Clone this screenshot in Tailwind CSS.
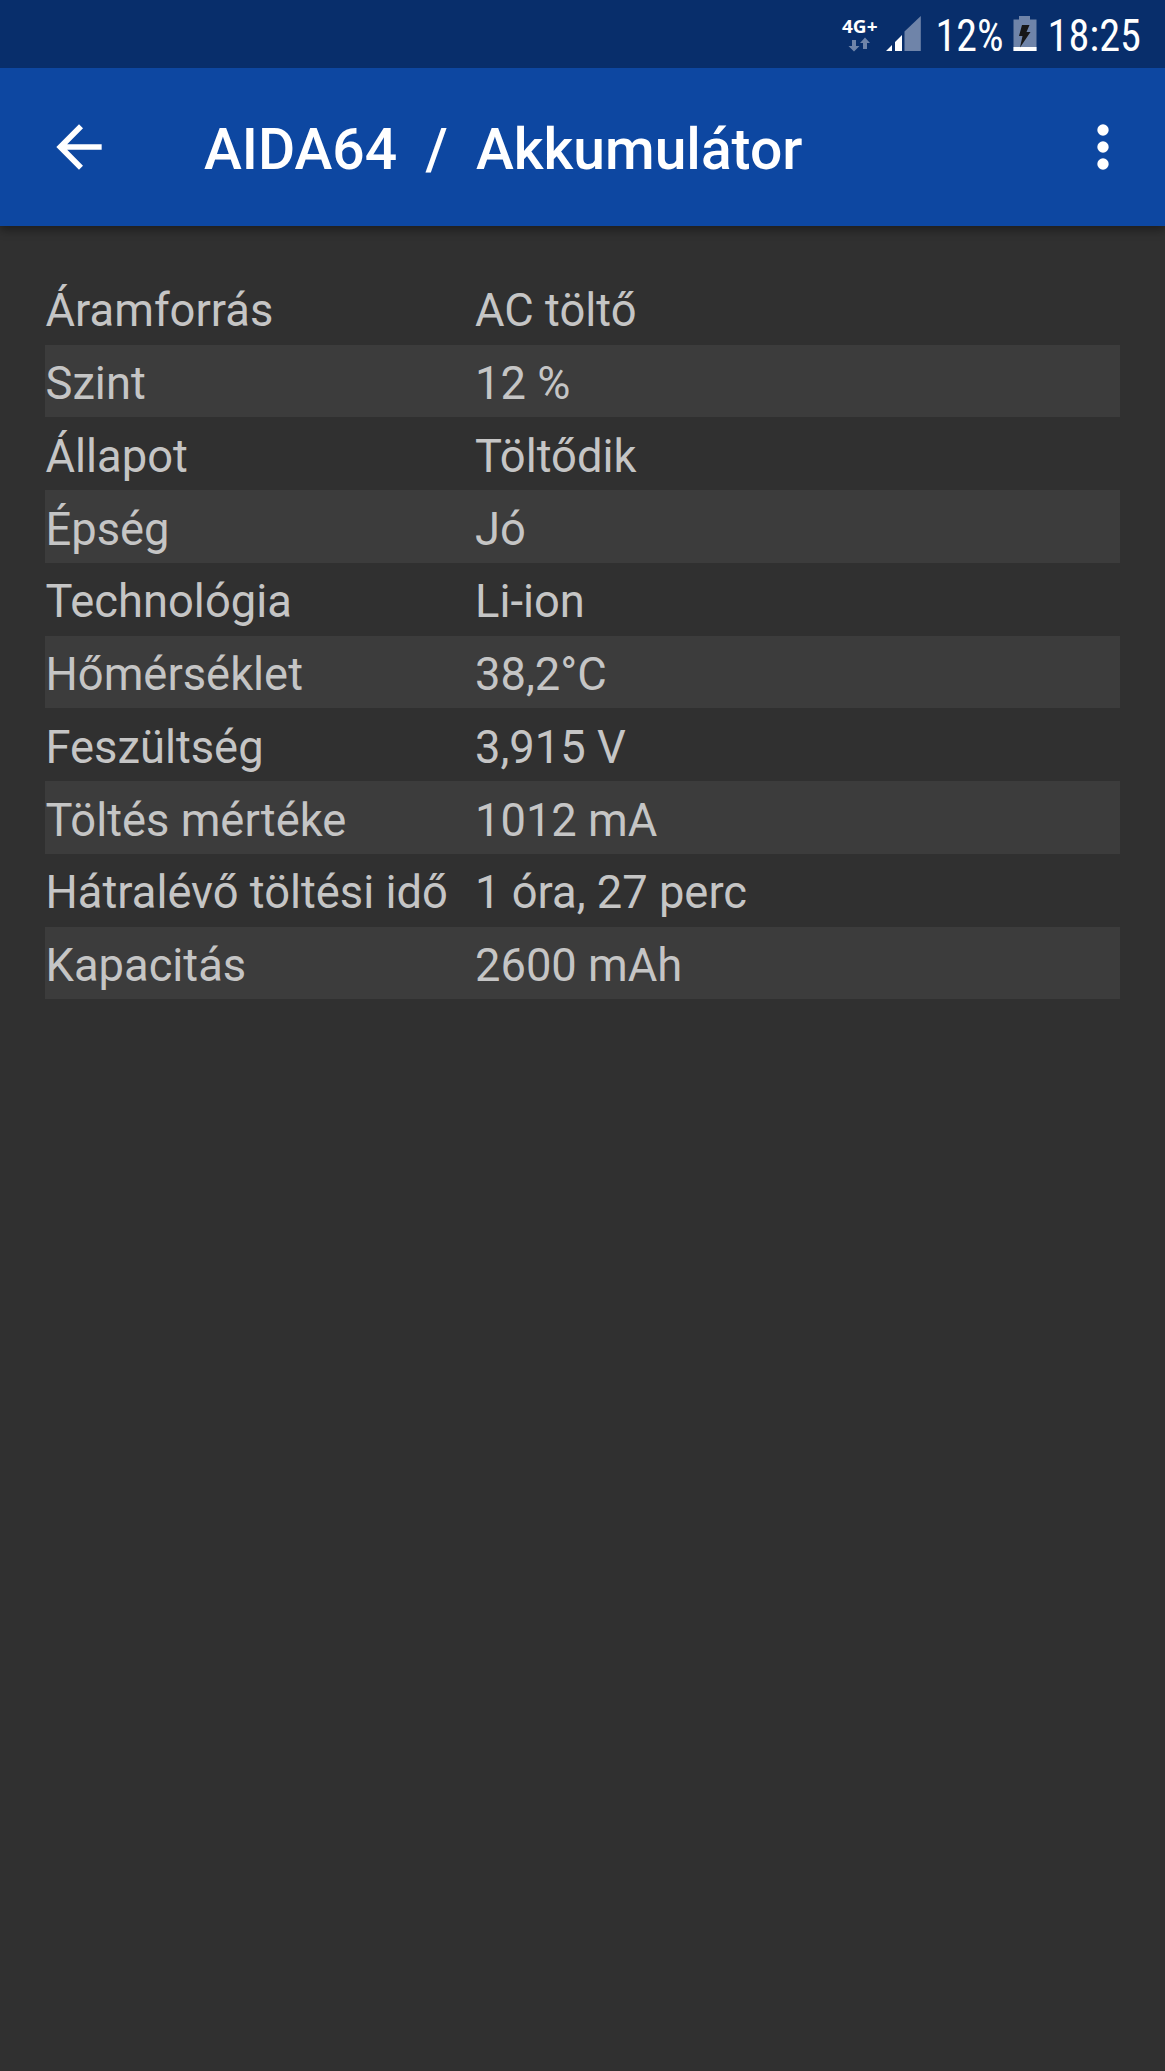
<!DOCTYPE html>
<html lang="hu">
<head>
<meta charset="utf-8">
<title>AIDA64 / Akkumulátor</title>
<script src="https://cdn.jsdelivr.net/npm/@tailwindcss/browser@4"></script>
</head>
<body class="min-h-screen bg-[#303030] font-[Roboto,sans-serif]">
<header class="shadow-[0_4px_9px_rgba(0,0,0,0.4)]">
  <div class="flex h-[68px] bg-[#082e6b] justify-end">
    <svg class="h-[68px] w-[325px]" viewBox="840 0 325 68" fill="#fff">
      <text x="842" y="32.5" font-family="Open Sans" font-weight="700" font-size="18" textLength="35.5" lengthAdjust="spacingAndGlyphs">4G+</text>
      <g fill="#6f84a9">
        <path d="M852 40h4v6h3.5l-5.500 5.500-5.500-5.500H852zM863 49h4v-6h3l-5-5.500-5 5.500h3z"/>
        <path d="M904.500 31.500 920.800 16v35h-16.300z"/>
        <path d="M1019 16h11v3.500h6.500V51h-23V19.500h5.500z"/>
      </g>
      <path d="M886 51l6-6v6zM895 42l7-7v16h-7z"/>
      <path d="M1013.500 47h23v4h-23z"/>
      <path fill="#171717" d="M1022 25h7.500l-3 7h4l-10.500 15.500 2.500-11.500h-3.500z"/>
      <text x="935.500" y="50.500" font-size="43.600" textLength="68" lengthAdjust="spacingAndGlyphs" class="[font-stretch:75%]">12%</text>
      <text x="1047.500" y="50.500" font-size="43.600" textLength="93.500" lengthAdjust="spacingAndGlyphs" class="[font-stretch:75%]">18:25</text>
    </svg>
  </div>
  <div class="flex h-[158px] items-center bg-[#0d47a1] pl-[45px] pr-[28px] text-white">
    <svg class="size-[68px]" viewBox="0 0 24 24" fill="currentColor"><path d="M20 11H7.830l5.590-5.590L12 4l-8 8 8 8 1.410-1.410L7.830 13H20v-2z"/></svg>
    <h1 class="ml-[91px] flex-1 whitespace-pre pt-[5px] text-[57px] leading-[68px] font-medium">AIDA64  /  Akkumulátor</h1>
    <svg class="size-[68px]" viewBox="0 0 24 24" fill="currentColor"><circle cx="12" cy="6" r="2"/><circle cx="12" cy="12" r="2"/><circle cx="12" cy="18" r="2"/></svg>
  </div>
</header>
<main class="px-[45px] pt-[45.800px]">
  <dl class="text-[45.300px] leading-[66.770px] text-[#c5c5c5] [&>div]:grid [&>div]:h-[72.770px] [&>div]:grid-cols-[429.5px_1fr] [&>div]:pt-[6.5px] [&>div]:pl-[0.5px] [&>div]:whitespace-nowrap [&>div:nth-child(even)]:bg-[#3c3c3c]">
    <div><dt>Áramforrás</dt><dd>AC töltő</dd></div>
    <div><dt>Szint</dt><dd>12 %</dd></div>
    <div><dt>Állapot</dt><dd>Töltődik</dd></div>
    <div><dt>Épség</dt><dd>Jó</dd></div>
    <div><dt>Technológia</dt><dd>Li-ion</dd></div>
    <div><dt>Hőmérséklet</dt><dd>38,2°C</dd></div>
    <div><dt>Feszültség</dt><dd>3,915 V</dd></div>
    <div><dt>Töltés mértéke</dt><dd>1012 mA</dd></div>
    <div><dt>Hátralévő töltési idő</dt><dd>1 óra, 27 perc</dd></div>
    <div><dt>Kapacitás</dt><dd>2600 mAh</dd></div>
  </dl>
</main>
</body>
</html>
